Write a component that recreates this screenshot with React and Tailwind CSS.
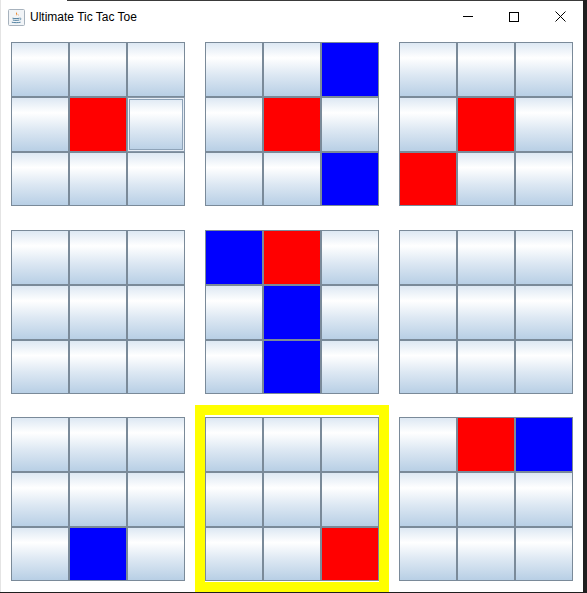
import React from "react";

// board cells: "r" red, "b" blue, "f" focused empty, null empty
const boards = [
  [null, null, null, null, "r", "f", null, null, null],
  [null, null, "b", null, "r", null, null, null, "b"],
  [null, null, null, null, "r", null, "r", null, null],
  [null, null, null, null, null, null, null, null, null],
  ["b", "r", null, null, "b", null, null, "b", null],
  [null, null, null, null, null, null, null, null, null],
  [null, null, null, null, null, null, null, "b", null],
  [null, null, null, null, null, null, null, null, "r"],
  [null, "r", "b", null, null, null, null, null, null],
];

const ACTIVE = 7;

const JavaIcon = () => (
  <svg width="17" height="17" viewBox="0 0 17 17">
    <rect x="0.5" y="0.5" width="16" height="16" rx="1" fill="#f1f4f7" stroke="#a7b2bd" />
    <path d="M9.2 2.2c-2 1.6 1.4 2.4-0.6 4.6 0.6-1.6-1.8-2.2 0.6-4.6z" fill="#e76f00" />
    <path d="M10.6 4.4c-1.2 0.9 0.6 1.4-0.4 2.6 0.4-1-1.1-1.2 0.4-2.6z" fill="#e76f00" />
    <path d="M4.5 9.2c1.6 0.5 5.6 0.5 7 0" stroke="#5382a1" strokeWidth="1" fill="none" />
    <path d="M4.8 11c1.6 0.5 5 0.5 6.4 0" stroke="#5382a1" strokeWidth="1" fill="none" />
    <path d="M11.8 9.2c1.4-0.4 1.6 1.4 0 1.8" stroke="#5382a1" strokeWidth="0.9" fill="none" />
    <path d="M3.8 13.2c2 0.6 7 0.6 8.8 0" stroke="#5382a1" strokeWidth="1" fill="none" />
  </svg>
);

const Cell = ({ value }) => {
  if (value === "r") {
    return <div className="border border-[#7a8a99] bg-[#ff0000]" />;
  }
  if (value === "b") {
    return <div className="border border-[#7a8a99] bg-[#0000ff]" />;
  }
  if (value === "f") {
    return (
      <div className="border border-[#8797a8] bg-[linear-gradient(to_bottom,#dde8f3_0%,#ffffff_28%,#dde8f3_60%,#b8cfe5_100%)] shadow-[inset_0_0_0_1px_#e6edf5,inset_0_0_0_2px_#8ea3b8]" />
    );
  }
  return (
    <div className="border border-[#7a8a99] bg-[linear-gradient(to_bottom,#dde8f3_0%,#ffffff_28%,#dde8f3_60%,#b8cfe5_100%)]" />
  );
};

const Board = ({ cells, active, top }) => (
  <div
    className={`flex flex-col ${top ? "justify-start" : "justify-center"} ${
      active ? "border-[10px] border-[#ffff00]" : "p-[10px]"
    }`}
  >
    <div className="grid grid-cols-3 grid-rows-[55px_55px_54px] w-[174px] h-[164px]">
      {cells.map((c, i) => (
        <Cell key={i} value={c} />
      ))}
    </div>
  </div>
);

export default function App() {
  return (
    <div className="w-[587px] h-[593px] bg-[#1f1f1f] overflow-hidden">
      <div className="w-[583px] h-[592px] bg-white flex flex-col border-l border-[#e4e4e4]">
        <div className="h-px flex">
          <div className="w-[66px] bg-white" />
          <div className="flex-1 bg-[#3a3a3a]" />
        </div>
        <div className="h-[31px] flex items-center bg-white">
          <div className="ml-[7px] mt-[1px] flex">
            <JavaIcon />
          </div>
          <span className="ml-[5px] text-[12px] text-black font-['Liberation_Sans',Arial,sans-serif]">
            Ultimate Tic Tac Toe
          </span>
          <div className="ml-auto flex h-full">
            <div className="w-[46px] flex items-center justify-center">
              <div className="w-[10px] h-px bg-black" />
            </div>
            <div className="w-[46px] flex items-center justify-center">
              <div className="w-[10px] h-[10px] border border-black" />
            </div>
            <div className="w-[46px] flex items-center justify-center">
              <svg width="11" height="11" viewBox="0 0 11 11">
                <path d="M0.5 0.5L10.5 10.5M10.5 0.5L0.5 10.5" stroke="#000" strokeWidth="1" />
              </svg>
            </div>
          </div>
        </div>
        <div className="grid grid-cols-[194px_194px_194px] grid-rows-[186px_187px_187px]">
          {boards.map((b, i) => (
            <Board key={i} cells={b} active={i === ACTIVE} top={i < 3} />
          ))}
        </div>
      </div>
    </div>
  );
}
